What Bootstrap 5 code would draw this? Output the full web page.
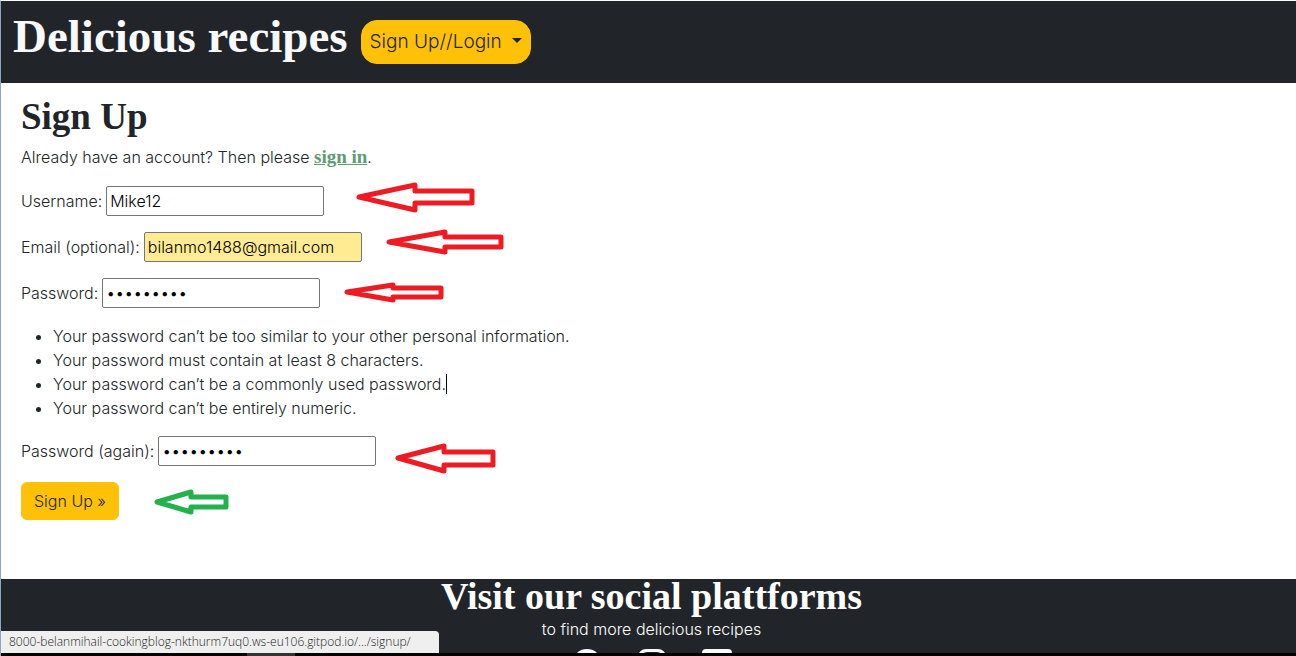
<!DOCTYPE html>
<html lang="en">
<head>
<meta charset="utf-8">
<meta name="viewport" content="width=device-width, initial-scale=1">
<title>Delicious recipes - Sign Up</title>
<link href="https://cdn.jsdelivr.net/npm/bootstrap@5.3.0/dist/css/bootstrap.min.css" rel="stylesheet">
<style>
body { font-family: Inter, sans-serif; font-weight: 300; border-left: 1px solid #8ea6c4; border-top: 1px solid #fff; }
.serif { font-family: "Liberation Serif", serif; font-weight: 700; }
.site-head { height: 82px; padding: 0 12px; gap: 13px; }
.brand { font-size: 47px; line-height: 70px; color: #f8f9fa; }
.btn-login { height: 44px; margin-top: 19px; padding: 0 8px; border-radius: 16px; font-size: 19px; font-weight: 300; color: #212529; }
.btn-login::after { margin-left: 10px; }
.page-title { font-size: 37px; line-height: 36px; margin-bottom: 10px; }
.intro { margin-bottom: 17px; line-height: 24px; }
.signin { color: #5c9c72; font-size: 19px; line-height: 20px; }
.field { width: 218px; height: 30px; padding: 1px 3px; border: 1px solid #767676; border-radius: 2px; font-weight: 300; color: #000; }
.field-auto { background: #ffeb91; }
.form-line { height: 30px; margin-bottom: 16px; }
.form-line label { margin-right: 4px; }
.arrow { height: 48px; margin: -9px 0; fill: none; stroke-width: 5; stroke-linejoin: round; stroke: #ed1c24; flex: none; }
.arrow-go { stroke: #22b14c; }
.caret { display: inline-block; width: 1px; height: 20px; margin-bottom: -4px; background: #000; }
.btn-send { font-weight: 300; color: #212529; }
.foot { height: 77px; padding-left: 6px; }
.foot-title { font-size: 38px; line-height: 34px; margin-bottom: 4px; }
.social-row { gap: 35px; }
.social { width: 30px; height: 30px; fill: #f8f9fa; }
.status { height: 22px; width: 438px; padding-left: 8px; font: 300 12px/22px "Open Sans", sans-serif; background: #efefef; color: #222; border-top-right-radius: 4px; }
.taskbar { height: 3px; background: #000; }
.task-on { width: 48px; height: 3px; margin-left: 246px; background: #333; }
</style>
</head>
<body class="vh-100 overflow-hidden d-flex flex-column bg-white">
<header class="site-head bg-dark d-flex align-items-start flex-shrink-0">
  <a href="#" class="brand serif text-decoration-none">Delicious recipes</a>
  <button class="btn btn-warning btn-login dropdown-toggle" type="button" data-bs-toggle="dropdown">Sign Up//Login</button>
</header>

<main class="flex-grow-1">
  <form class="px-3 pt-3 ms-1">
    <h1 class="page-title serif">Sign Up</h1>
    <p class="intro">Already have an account? Then please <a class="signin serif" href="#">sign in</a>.</p>
    <div class="form-line d-flex align-items-center">
      <label for="user">Username:</label><input id="user" class="field" type="text" value="Mike12">
      <svg class="arrow" width="156" viewBox="0 0 156 48" aria-hidden="true"><path d="M35 20 91 8V14H148V26H91V33Z"/></svg>
    </div>
    <div class="form-line d-flex align-items-center">
      <label for="mail">Email (optional):</label><input id="mail" class="field field-auto" type="email" value="bilanmo1488@gmail.com">
      <svg class="arrow" width="156" viewBox="0 0 156 48" aria-hidden="true"><path d="M27 19 83 9V14H139V24H83V29Z"/></svg>
    </div>
    <div class="form-line d-flex align-items-center">
      <label for="pw1">Password:</label><input id="pw1" class="field" type="password" value="recipes12">
      <svg class="arrow" width="156" viewBox="0 0 156 48" aria-hidden="true"><path d="M27 23 73 16V19H121V28H73V31Z"/></svg>
    </div>
    <ul class="mb-3">
      <li>Your password can’t be too similar to your other personal information.</li>
      <li>Your password must contain at least 8 characters.</li>
      <li>Your password can’t be a commonly used password.<span class="caret"></span></li>
      <li>Your password can’t be entirely numeric.</li>
    </ul>
    <div class="form-line d-flex align-items-center">
      <label for="pw2">Password (again):</label><input id="pw2" class="field" type="password" value="recipes12">
      <svg class="arrow" width="156" viewBox="0 0 156 48" aria-hidden="true"><path d="M22 31 68 19V25H117V38H68V44Z"/></svg>
    </div>
    <div class="d-flex align-items-center">
      <button class="btn btn-warning btn-send" type="submit">Sign Up »</button>
      <svg class="arrow arrow-go" width="156" viewBox="0 0 156 48" aria-hidden="true"><path d="M38 25 72 15V20H107V30H72V35Z"/></svg>
    </div>
  </form>
</main>

<footer class="foot bg-dark text-white text-center position-relative flex-shrink-0">
  <h2 class="foot-title serif">Visit our social plattforms</h2>
  <p class="mb-2">to find more delicious recipes</p>
  <div class="social-row d-flex justify-content-center">
    <a href="#" aria-label="Facebook"><svg class="social d-block" viewBox="0 0 30 30"><circle cx="15" cy="15" r="15"/></svg></a>
    <a href="#" aria-label="Instagram"><svg class="social d-block" viewBox="0 0 30 30"><path fill-rule="evenodd" d="M9 0H21A8 8 0 0 1 29 8V22A8 8 0 0 1 21 30H9A8 8 0 0 1 1 22V8A8 8 0 0 1 9 0ZM10 3A6 6 0 0 0 4 9V21A6 6 0 0 0 10 27H20A6 6 0 0 0 26 21V9A6 6 0 0 0 20 3Z"/></svg></a>
    <a href="#" aria-label="Twitter"><svg class="social d-block" viewBox="0 0 30 30"><rect width="30" height="30" rx="4"/></svg></a>
  </div>
  <div class="position-absolute bottom-0 start-0 w-100 text-start">
    <div class="status">8000-belanmihail-cookingblog-nkthurm7uq0.ws-eu106.gitpod.io/.../signup/</div>
    <div class="taskbar"><div class="task-on"></div></div>
  </div>
</footer>
<script src="https://cdn.jsdelivr.net/npm/bootstrap@5.3.0/dist/js/bootstrap.bundle.min.js"></script>
</body>
</html>
